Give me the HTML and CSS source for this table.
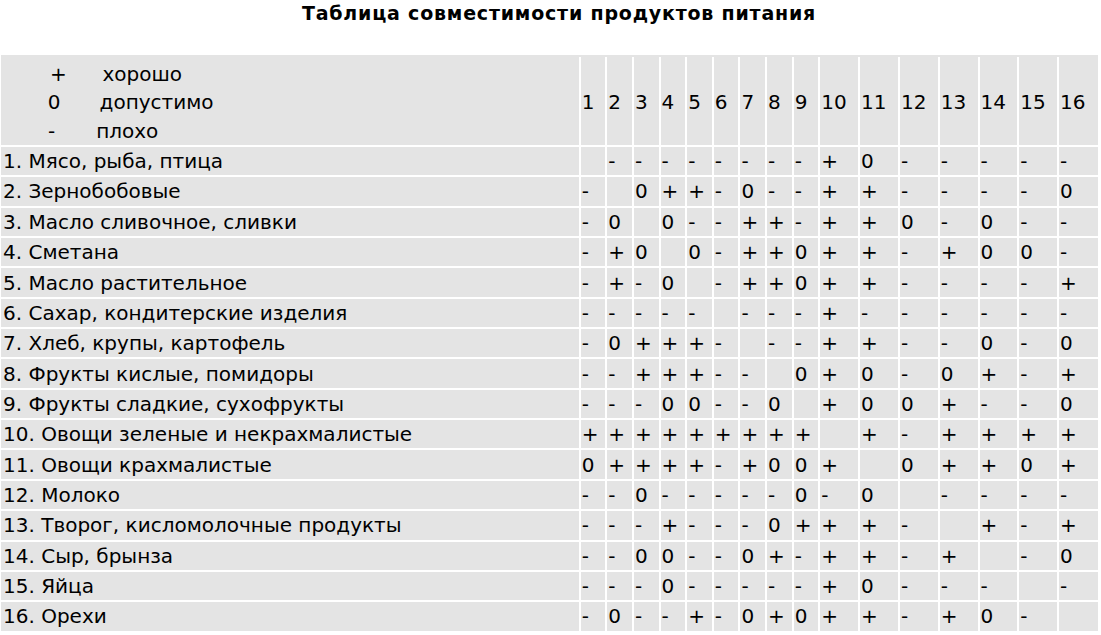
FILE: index.html
```html
<!DOCTYPE html>
<html lang="ru">
<head>
<meta charset="utf-8">
<title>Таблица совместимости продуктов питания</title>
<link rel="stylesheet" href="styles.css">
</head>
<body>
<h1 class="title">Таблица совместимости продуктов питания</h1>
<div class="frame">
<table class="grid">
<colgroup>
<col class="c-label">
<col class="c-n"><col class="c-n"><col class="c-n"><col class="c-n"><col class="c-n"><col class="c-n"><col class="c-n"><col class="c-n"><col class="c-n">
<col class="c-w"><col class="c-w"><col class="c-w"><col class="c-w"><col class="c-w"><col class="c-w">
<col class="c-last">
</colgroup>
<thead>
<tr>
<th class="legend">
<div class="lg lg-good"><span class="sym">+</span><span>хорошо</span></div>
<div class="lg lg-ok"><span class="sym">0</span><span>допустимо</span></div>
<div class="lg lg-bad"><span class="sym">-</span><span>плохо</span></div>
</th>
<th>1</th><th>2</th><th>3</th><th>4</th><th>5</th><th>6</th><th>7</th><th>8</th><th>9</th><th>10</th><th>11</th><th>12</th><th>13</th><th>14</th><th>15</th><th>16</th>
</tr>
</thead>
<tbody>
<tr><td>1. Мясо, рыба, птица</td><td></td><td>-</td><td>-</td><td>-</td><td>-</td><td>-</td><td>-</td><td>-</td><td>-</td><td>+</td><td>0</td><td>-</td><td>-</td><td>-</td><td>-</td><td>-</td></tr>
<tr><td>2. Зернобобовые</td><td>-</td><td></td><td>0</td><td>+</td><td>+</td><td>-</td><td>0</td><td>-</td><td>-</td><td>+</td><td>+</td><td>-</td><td>-</td><td>-</td><td>-</td><td>0</td></tr>
<tr><td>3. Масло сливочное, сливки</td><td>-</td><td>0</td><td></td><td>0</td><td>-</td><td>-</td><td>+</td><td>+</td><td>-</td><td>+</td><td>+</td><td>0</td><td>-</td><td>0</td><td>-</td><td>-</td></tr>
<tr><td>4. Сметана</td><td>-</td><td>+</td><td>0</td><td></td><td>0</td><td>-</td><td>+</td><td>+</td><td>0</td><td>+</td><td>+</td><td>-</td><td>+</td><td>0</td><td>0</td><td>-</td></tr>
<tr><td>5. Масло растительное</td><td>-</td><td>+</td><td>-</td><td>0</td><td></td><td>-</td><td>+</td><td>+</td><td>0</td><td>+</td><td>+</td><td>-</td><td>-</td><td>-</td><td>-</td><td>+</td></tr>
<tr><td>6. Сахар, кондитерские изделия</td><td>-</td><td>-</td><td>-</td><td>-</td><td>-</td><td></td><td>-</td><td>-</td><td>-</td><td>+</td><td>-</td><td>-</td><td>-</td><td>-</td><td>-</td><td>-</td></tr>
<tr><td>7. Хлеб, крупы, картофель</td><td>-</td><td>0</td><td>+</td><td>+</td><td>+</td><td>-</td><td></td><td>-</td><td>-</td><td>+</td><td>+</td><td>-</td><td>-</td><td>0</td><td>-</td><td>0</td></tr>
<tr><td>8. Фрукты кислые, помидоры</td><td>-</td><td>-</td><td>+</td><td>+</td><td>+</td><td>-</td><td>-</td><td></td><td>0</td><td>+</td><td>0</td><td>-</td><td>0</td><td>+</td><td>-</td><td>+</td></tr>
<tr><td>9. Фрукты сладкие, сухофрукты</td><td>-</td><td>-</td><td>-</td><td>0</td><td>0</td><td>-</td><td>-</td><td>0</td><td></td><td>+</td><td>0</td><td>0</td><td>+</td><td>-</td><td>-</td><td>0</td></tr>
<tr><td>10. Овощи зеленые и некрахмалистые</td><td>+</td><td>+</td><td>+</td><td>+</td><td>+</td><td>+</td><td>+</td><td>+</td><td>+</td><td></td><td>+</td><td>-</td><td>+</td><td>+</td><td>+</td><td>+</td></tr>
<tr><td>11. Овощи крахмалистые</td><td>0</td><td>+</td><td>+</td><td>+</td><td>+</td><td>-</td><td>+</td><td>0</td><td>0</td><td>+</td><td></td><td>0</td><td>+</td><td>+</td><td>0</td><td>+</td></tr>
<tr><td>12. Молоко</td><td>-</td><td>-</td><td>0</td><td>-</td><td>-</td><td>-</td><td>-</td><td>-</td><td>0</td><td>-</td><td>0</td><td></td><td>-</td><td>-</td><td>-</td><td>-</td></tr>
<tr><td>13. Творог, кисломолочные продукты</td><td>-</td><td>-</td><td>-</td><td>+</td><td>-</td><td>-</td><td>-</td><td>0</td><td>+</td><td>+</td><td>+</td><td>-</td><td></td><td>+</td><td>-</td><td>+</td></tr>
<tr><td>14. Сыр, брынза</td><td>-</td><td>-</td><td>0</td><td>0</td><td>-</td><td>-</td><td>0</td><td>+</td><td>-</td><td>+</td><td>+</td><td>-</td><td>+</td><td></td><td>-</td><td>0</td></tr>
<tr><td>15. Яйца</td><td>-</td><td>-</td><td>-</td><td>0</td><td>-</td><td>-</td><td>-</td><td>-</td><td>-</td><td>+</td><td>0</td><td>-</td><td>-</td><td>-</td><td></td><td>-</td></tr>
<tr><td>16. Орехи</td><td>-</td><td>0</td><td>-</td><td>-</td><td>+</td><td>-</td><td>0</td><td>+</td><td>0</td><td>+</td><td>+</td><td>-</td><td>+</td><td>0</td><td>-</td><td></td></tr>
</tbody>
</table>
</div>
</body>
</html>
```
FILE: styles.css
```css
html, body {
  margin: 0;
  padding: 0;
  background: #ffffff;
}

body {
  font-family: "DejaVu Sans", Verdana, sans-serif;
  color: #000;
}

.title {
  margin: 1px 0 0 0;
  padding-left: 17px;
  font-size: 19px;
  line-height: 24px;
  letter-spacing: 0.8px;
  font-weight: bold;
  text-align: center;
  height: 54px;
}

.frame {
  margin-left: 1px;
  width: 1097px;
  background: #e4e4e4;
  padding-top: 2px;
}

.grid {
  width: 100%;
  table-layout: fixed;
  border-collapse: collapse;
  border-style: hidden;
  font-size: 20px;
}

.c-label { width: 578.7px; }
.c-n { width: 26.64px; }
.c-w { width: 39.8px; }
.c-last { width: auto; }

.grid th,
.grid td {
  border: 2px solid #ffffff;
  padding: 0 0 0 1px;
  text-align: left;
  font-weight: normal;
  white-space: nowrap;
  vertical-align: middle;
}

.grid thead th {
  height: 88px;
  padding-top: 3px;
  box-sizing: border-box;
}

.grid tbody td {
  height: 28.36px;
  line-height: 22px;
}

.grid tbody td:first-child {
  padding-left: 2px;
}

.grid th.legend {
  padding-left: 2px;
}

.lg {
  display: flex;
  line-height: 28.3px;
}

.lg-good .sym { margin-left: 47px; width: 52.5px; }
.lg-ok .sym { margin-left: 44.7px; width: 51.9px; }
.lg-bad .sym { margin-left: 45px; width: 48.2px; }
```
